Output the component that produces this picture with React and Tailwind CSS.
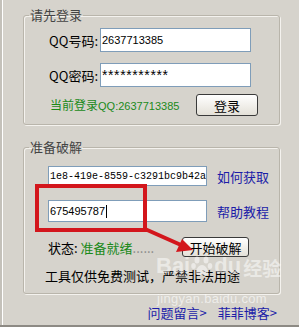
export default function App() {
  const inputCls = "bg-white border border-[#7f9db9]";
  return (
    <div className="w-[299px] h-[327px] bg-[#d6d3cc] relative overflow-hidden flex border-b-2 border-[#8d8a84] font-['SimSun','Noto_Sans_CJK_SC',sans-serif] text-black">
      <div className="w-[2px] h-full bg-[#c4c1ba] border-r border-white shrink-0 box-content" />
      <div className="flex flex-col pl-[20px]">
        <fieldset className="mt-[7px] w-[257px] border border-[#b9b5ab] rounded-[3px] px-0 shadow-[inset_1px_1px_0_#f4f2ee,1px_1px_0_#f4f2ee]">
          <legend className="ml-[5px] px-[1px] text-[13px] leading-[16px] text-[#444]">请先登录</legend>
          <div className="pt-[5px] pb-[8px]">
            <div className="flex items-center h-[24px]">
              <span className="w-[74px] text-right text-[13px] leading-none">QQ号码:</span>
              <div className={`ml-[2px] w-[151px] h-[24px] ${inputCls} pl-[1px] flex items-center font-['Liberation_Sans',sans-serif] text-[11px]`}>2637713385</div>
            </div>
            <div className="flex items-center h-[24px] mt-[11px]">
              <span className="w-[74px] text-right text-[13px] leading-none">QQ密码:</span>
              <div className={`ml-[2px] w-[151px] h-[24px] ${inputCls} pl-[1px] flex items-center font-['Liberation_Sans',sans-serif] text-[14px] tracking-[0.6px]`}>***********</div>
            </div>
            <div className="flex items-center h-[22px] mt-[7px]">
              <span className="ml-[26px] text-[12px] text-[#1a8a1a] leading-none">当前登录<span className="font-['Liberation_Sans',sans-serif] text-[11px]">QQ:2637713385</span></span>
              <button className="ml-auto mr-[21px] w-[62px] h-[22px] rounded-[3px] border border-[#3a3a3a] bg-gradient-to-b from-white to-[#e4e1d8] text-[13px] leading-none">登录</button>
            </div>
          </div>
        </fieldset>

        <fieldset className="mt-[14px] w-[257px] border border-[#b9b5ab] rounded-[3px] px-0 shadow-[inset_1px_1px_0_#f4f2ee,1px_1px_0_#f4f2ee]">
          <legend className="ml-[5px] px-[1px] text-[13px] leading-[16px] text-[#444]">准备破解</legend>
          <div className="pt-[11px] pb-[9px]">
            <div className="flex items-center">
              <div className={`ml-[24px] w-[159px] h-[20px] ${inputCls} pl-[1px] flex items-center font-['Liberation_Mono',monospace] text-[10px] overflow-hidden whitespace-nowrap`}>1e8-419e-8559-c3291bc9b42a</div>
              <span className="ml-[10px] text-[13px] text-[#1c1ca8] leading-none">如何获取</span>
            </div>
            <div className="flex items-center mt-[14px]">
              <div className={`ml-[24px] w-[159px] h-[22px] ${inputCls} pl-[1px] flex items-center font-['Liberation_Sans',sans-serif] text-[11px]`}>
                675495787<span className="inline-block w-[1px] h-[13px] bg-black ml-[1px]" />
              </div>
              <span className="ml-[10px] text-[13px] text-[#1c1ca8] leading-none">帮助教程</span>
            </div>
            <div className="flex items-center mt-[15px] h-[20px]">
              <div className="ml-[24px] w-[134px] text-[13px] leading-none whitespace-nowrap">
                状态: <span className="text-[#1a8a1a]">准备就绪</span><span className="text-[#888]">......</span>
              </div>
              <button className="w-[67px] h-[20px] rounded-[3px] border border-[#3a3a3a] bg-gradient-to-b from-white to-[#e4e1d8] text-[13px] leading-none">开始破解</button>
            </div>
            <div className="mt-[11px] ml-[21px] text-[13px] leading-[16px] whitespace-nowrap">工具仅供免费测试，严禁非法用途</div>
          </div>
        </fieldset>

        <div className="flex justify-end gap-[11px] mt-[12px] pr-[3px] text-[13px] text-[#1c1ca8] leading-none">
          <span>问题留言&gt;</span>
          <span>菲菲博客&gt;</span>
        </div>
      </div>

      {/* red annotation box */}
      <div className="absolute left-[35px] top-[184px] w-[112px] h-[48px] border-4 border-[#d3161c]" />
      <svg className="absolute left-0 top-0" width="299" height="327">
        <line x1="145" y1="229" x2="181" y2="245" stroke="#d3161c" strokeWidth="4" />
        <polygon points="193,250 176,252 182,239" fill="#d3161c" />
      </svg>

      {/* watermark */}
      <div className="absolute left-[156px] top-[255px] flex items-end text-white/50 font-['Liberation_Sans',sans-serif] font-bold text-[22px] leading-none">
        <span>Bai</span>
        <svg width="22" height="22" viewBox="0 0 22 22" className="mx-[1px]">
          <g fill="rgba(255,255,255,0.5)">
            <ellipse cx="6" cy="5" rx="2.5" ry="3.5" />
            <ellipse cx="15" cy="5" rx="2.5" ry="3.5" />
            <ellipse cx="2.5" cy="11" rx="2.3" ry="3" />
            <ellipse cx="19" cy="11" rx="2.3" ry="3" />
            <path d="M11 10 C7 10 4 16 5 19 C6 21 9 20 11 20 C13 20 16 21 17 19 C18 16 15 10 11 10Z" />
          </g>
        </svg>
        <span>du</span>
        <span className="ml-[2px] font-['Noto_Sans_CJK_SC',sans-serif] text-[19px]">经验</span>
      </div>
      <div className="absolute left-[157px] top-[292px] text-white/60 font-['Liberation_Sans',sans-serif] text-[13px] leading-none tracking-[0.3px]">jingyan.baidu.com</div>
    </div>
  );
}
